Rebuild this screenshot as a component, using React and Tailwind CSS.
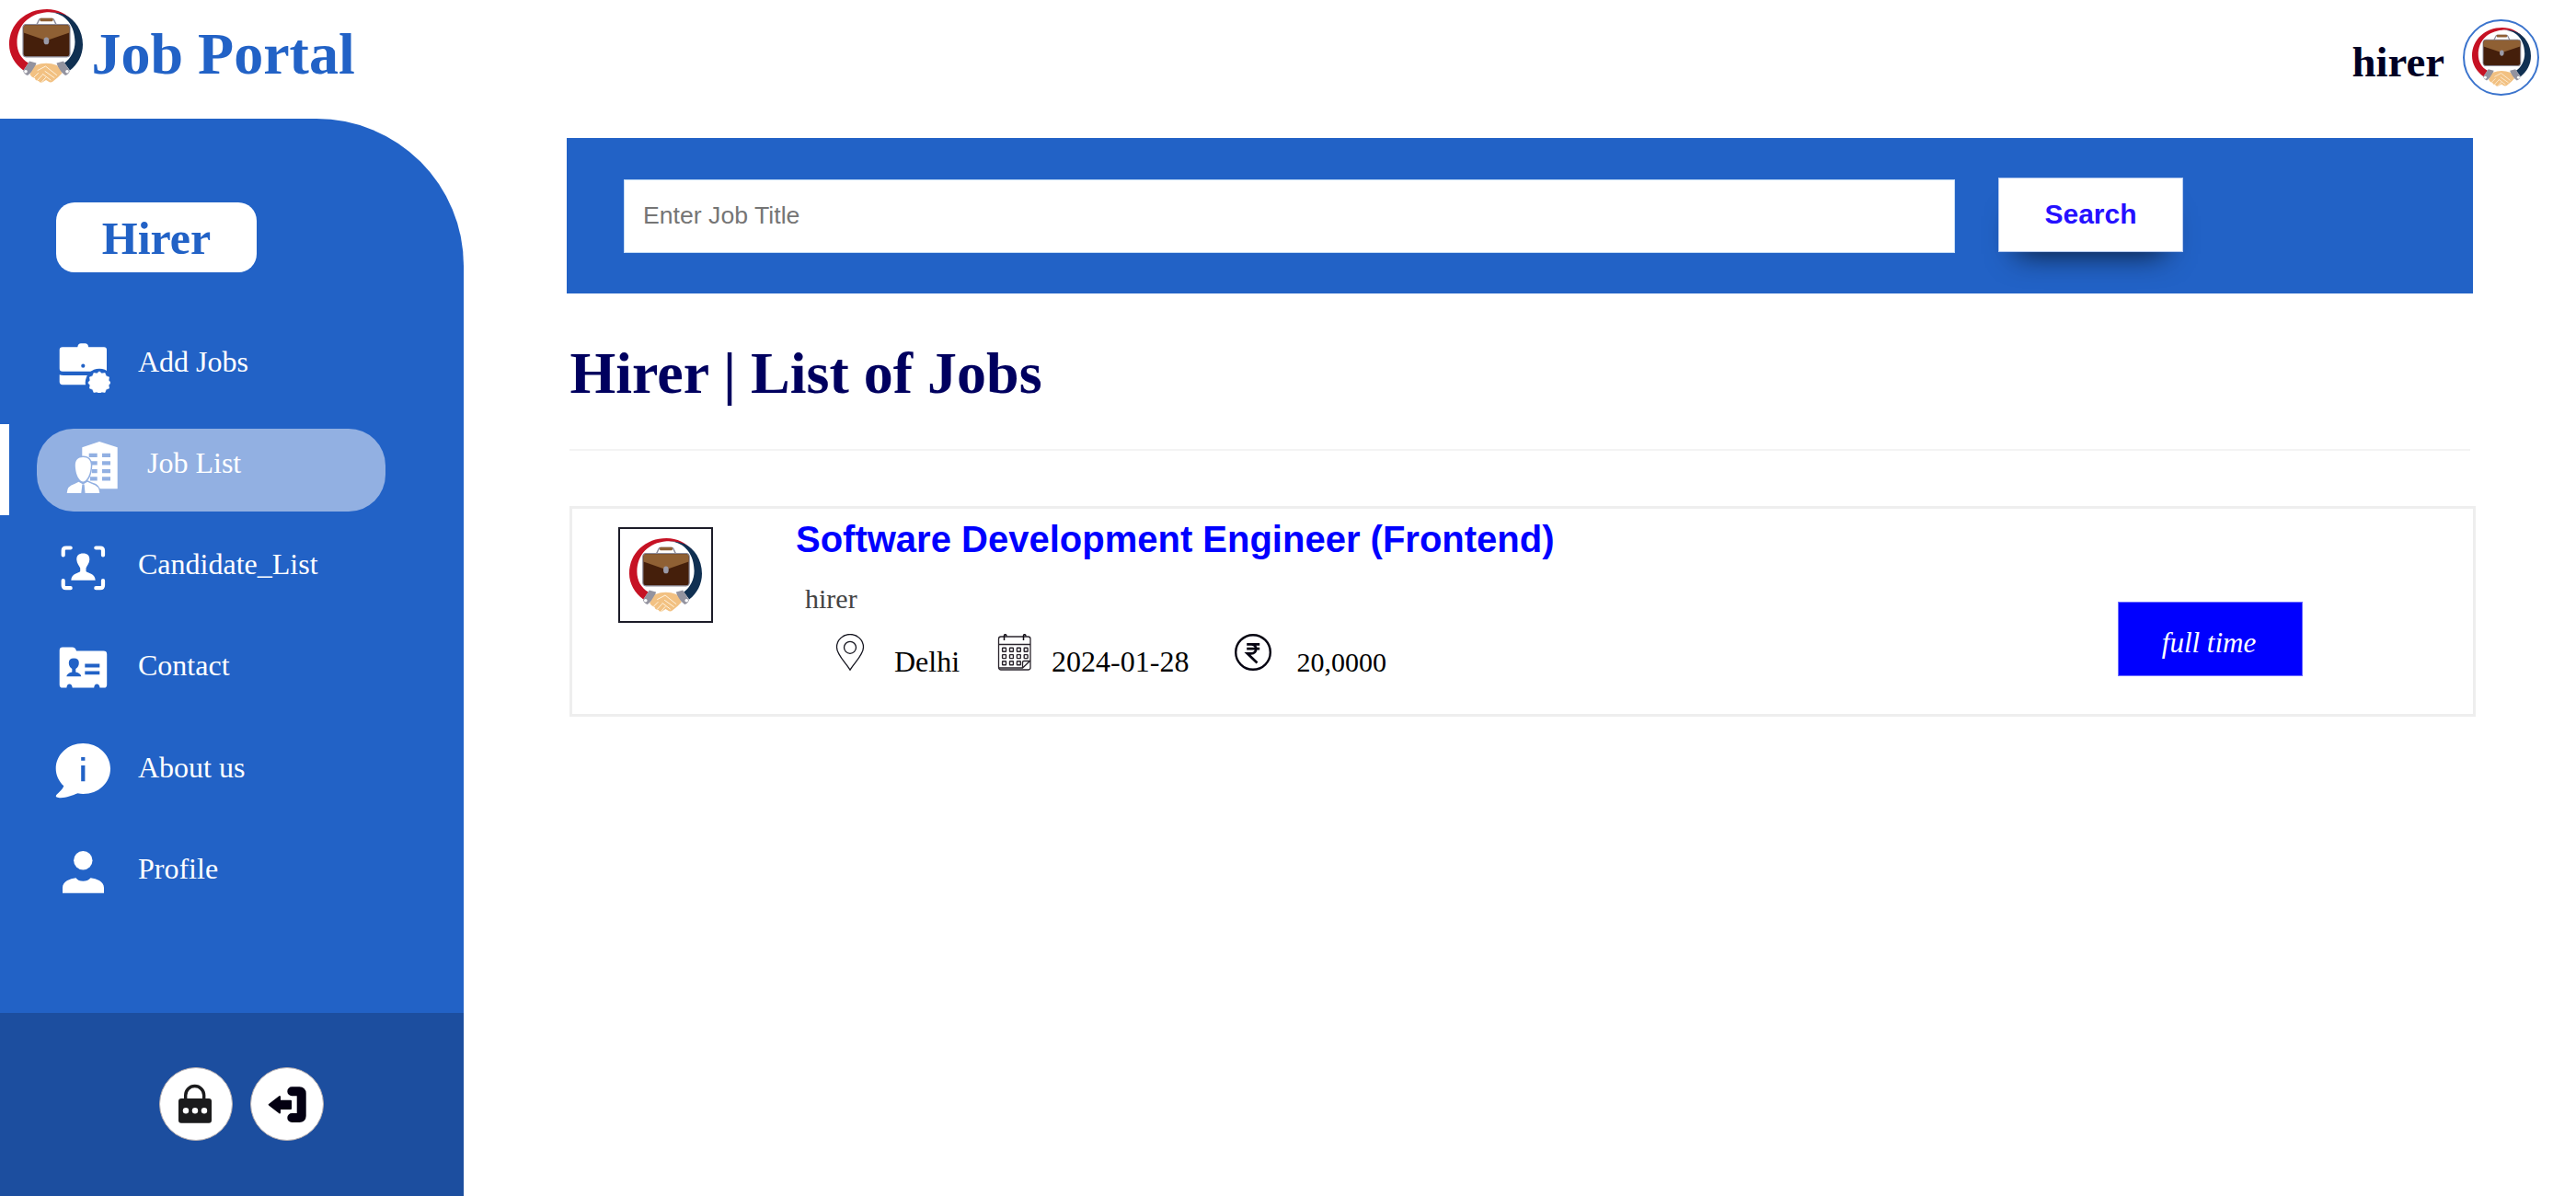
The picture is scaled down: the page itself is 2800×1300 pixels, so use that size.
import React from "react";

const SERIF = "font-['Liberation_Serif','Times_New_Roman',serif]";
const SANS = "font-['Liberation_Sans',Arial,sans-serif]";

function Logo({ className }) {
  return (
    <svg viewBox="0 0 80 80" preserveAspectRatio="none" className={className}>
      <path d="M15.5 66.5C6 59.5 0 49.500 0 38.500C0 16 18 0 41 0C53 0 62 5 69 12.500C60 5.500 51 2.800 41 3.300C21 5 8.500 18 8.500 36.500C8.500 46 13 54 21 58.500Z" fill="#c61224" />
      <path d="M44 3.500C62 4 71.500 19 71.500 35.500C71.500 45 67 53.500 60 58.500L66 66.500C74.500 60 80 50 80 38.500C80 23 71.500 11.500 61.500 6.500C56 4 50 3.200 44 3.500Z" fill="#103052" />
      <path d="M29.800 17L32.500 11.500Q33 10.500 34.500 10.500H46.500Q48 10.500 48.500 11.500L51.200 17" fill="none" stroke="#8d8d9c" strokeWidth="1.500" />
      <rect x="33.500" y="9.800" width="14" height="3.400" rx="1" fill="#8f6034" />
      <rect x="15" y="16.600" width="51" height="35.200" rx="3.500" fill="#451f0b" stroke="#8d8d9c" strokeWidth="1.200" />
      <path d="M15.600 25.500V20Q15.600 17.200 18.600 17.200H62.400Q65.400 17.200 65.400 20V25.500L43 33.200H38Z" fill="#8f6034" />
      <ellipse cx="40.400" cy="34.400" rx="2.900" ry="3.900" fill="#9a9aa8" />
      <path d="M22 56.500L29.500 58.500L27 66L20 72Q16 70.500 15.200 67Z" fill="#93939f" />
      <path d="M59 56.500L51.500 58.500L54 66L61 72Q65 70.500 65.800 67Z" fill="#93939f" />
      <circle cx="18" cy="67.800" r="1.800" fill="#fff" />
      <circle cx="63" cy="67.800" r="1.800" fill="#fff" />
      <path d="M28.500 61Q40 56.500 52 61L57.500 69.500Q53 74.500 47.500 78.500Q45 80.500 42.500 78.500L40 77L36 79.500Q33 80.500 32 78Q28 77.500 28 75Q24 74 22.500 70.500Z" fill="#f2c182" />
      <path d="M31 66.500L39.500 62L51.500 71.500M39 67.500L49 74.500M36.500 70.500L45 77M27 74L31.500 69.500M30.500 77.500L36 71.500M35 79.500L39.500 74.500" fill="none" stroke="#fff3df" strokeWidth="1" strokeLinecap="round" />
    </svg>
  );
}

const scallop = Array.from({ length: 24 }, (_, i) => {
  const a = (i * Math.PI) / 12 - Math.PI / 2;
  const r = i % 2 ? 10.4 : 12.2;
  return `${(48 + r * Math.cos(a)).toFixed(2)},${(49 + r * Math.sin(a)).toFixed(2)}`;
}).join(" ");

function AddJobsIcon() {
  return (
    <>
      <mask id="badge-gap">
        <rect width="60" height="60" fill="#fff" />
        <circle cx="48" cy="49" r="15.300" fill="#000" />
        <circle cx="30.300" cy="30.700" r="2.100" fill="#000" />
      </mask>
      <path mask="url(#badge-gap)" d="M8 10.300H24.300Q24.800 6.300 28 6.300H32.500Q35.700 6.300 36.200 10.300H53Q56 10.300 56 13.300V36.700H8Q4.700 36.700 4.700 33.500V13.300Q4.700 10.300 8 10.300ZM4.700 40.300Q6 41 9 41H38V51.300H8Q4.700 51 4.700 48Z" />
      <polygon points={scallop} stroke="#fff" strokeWidth=".6" strokeLinejoin="round" />
    </>
  );
}

function JobListIcon() {
  return (
    <>
      <path fillRule="evenodd" d="M19.300 9.300L38 3L57.700 9.300V54.300H38L19.300 46ZM26.700 15.700V20H35.700V15.700ZM41 15.700V20H50V15.700ZM28 24.300V28.500H35.700V24.300ZM41 24.300V28.500H50V24.300ZM30 33V37.200H35.700V33ZM41 33V37.200H50V33ZM28 41.300V45.600H35.700V41.300ZM41 41.300V45.600H50V41.300Z" />
      <g stroke="#92b0e2" strokeWidth="3" paintOrder="stroke">
        <path d="M2.700 59Q3 51 11 49L15.500 46.800L20.300 49.500L25 46.800L30 49Q38 51 38.300 59Z" />
        <path d="M20.300 20C26 20 29 23.500 28.800 29C28.600 36 26.500 42.500 22.500 45.800Q20.300 47.300 18 45.800C14 42.500 12 36 11.800 29C11.700 23.500 14.600 20 20.300 20Z" />
      </g>
      <path d="M19.400 49.500H21.600L22.600 59.500H18.200Z" fill="#92b0e2" />
    </>
  );
}

function CandidateIcon() {
  return (
    <>
      <path d="M8.700 16.500V11.500Q8.700 8.500 11.700 8.500H16.700M44.300 8.500H49Q52 8.500 52 11.500V16.500M52 44V49.200Q52 52.200 49 52.200H44.300M16.700 52.200H11.700Q8.700 52.200 8.700 49.200V44" fill="none" stroke="#fff" strokeWidth="4.200" strokeLinecap="round" />
      <path d="M30.300 14.500C35 14.500 37.600 17 37.300 21.500C37 25.500 34.500 28 33.500 30.500V34C35 36 43.500 36 43.700 43.800H17.300C17.500 36 26 36 27.200 34V30.500C26 28 23.600 25.500 23.300 21.500C23 17 25.700 14.500 30.300 14.500Z" />
    </>
  );
}

function ContactIcon() {
  return (
    <path fillRule="evenodd" d="M8 6.600H18.500Q22 6.600 23 10.600H52.500Q56.200 10.600 56.200 14V47.200Q56.200 50.600 53 50.600H48.500Q48 46.500 45.300 46.500Q42.600 46.500 42.200 50.600H18.700Q18.200 46.500 15.500 46.500Q12.800 46.500 12.400 50.600H8Q4.700 50.600 4.700 47.200V10Q4.700 6.600 8 6.600ZM20.300 18.600Q14.800 18.600 14.800 23.500Q14.800 27.500 18.300 30V33.500Q12.600 35 12.300 38.300H28.300Q28 35 22.300 33.500V30Q25.800 27.500 25.800 23.500Q25.800 18.600 20.300 18.600ZM32.300 24.600V28.500H48.300V24.600ZM32.300 32.400V36.300H48.300V32.400Z" />
  );
}

function AboutIcon() {
  return (
    <path fillRule="evenodd" d="M30.300 0C14 0 .7 12 .7 27.500C.7 34.500 4 41.500 9.300 46.300C8 50.500 3.500 53.500 1 56.500C0 58.500 2.500 59.200 6 59.200C12 59.200 19 56.500 24.500 54.300Q27.500 55 30.300 55C47 55 60 43 60 27.500C60 12 46.500 0 30.300 0ZM28.200 15H32.400V18.800H28.200ZM28.200 24H32.400V41.300H28.200Z" />
  );
}

function ProfileIcon() {
  return (
    <>
      <circle cx="30.300" cy="17.200" r="10.200" />
      <path d="M8 52.800V47C8 40 16 37 22.500 36.200Q25 39.800 30.300 39.800Q35.500 39.800 38.500 36.200C45 37 53 40 53 47V52.800Z" />
    </>
  );
}

const NAV = [
  { label: "Add Jobs", Icon: AddJobsIcon },
  { label: "Job List", Icon: JobListIcon, active: true },
  { label: "Candidate_List", Icon: CandidateIcon },
  { label: "Contact", Icon: ContactIcon },
  { label: "About us", Icon: AboutIcon },
  { label: "Profile", Icon: ProfileIcon },
];

function NavItem({ label, Icon, active }) {
  return (
    <li
      className={
        "relative ml-[40px] flex h-[90px] w-[379px] items-start gap-[30px] rounded-[40px] pt-[11px] " +
        (active ? "bg-[#92b0e2] pl-[30px]" : "pl-[20px]")
      }
    >
      {active && <span className="absolute -left-[40px] -top-[5px] h-[99px] w-[10px] bg-white" />}
      <svg viewBox="0 0 60 60" fill="#fff" className="h-[60px] w-[60px] shrink-0">
        <Icon />
      </svg>
      <span className="pt-[8px] text-[32px] leading-[36px] text-white">{label}</span>
    </li>
  );
}

function Sidebar() {
  return (
    <aside className="flex h-[1171px] w-[504px] shrink-0 flex-col overflow-hidden rounded-tr-[160px] bg-[#2262c6]">
      <div className="ml-[61px] mt-[91px] flex h-[76px] w-[218px] items-center justify-center rounded-[20px] bg-white text-[50px] font-bold leading-[56px] text-[#2262c6]">
        <span className="mt-[1px]">Hirer</span>
      </div>
      <ul className="mt-[59.500px] flex flex-1 flex-col gap-[20.25px]">
        {NAV.map((n) => (
          <NavItem key={n.label} {...n} />
        ))}
      </ul>
      <div className="flex h-[199px] gap-[19px] bg-[#1c4e9f] pl-[173px] pt-[59px]">
        <button className="h-[80px] w-[80px] overflow-hidden rounded-full border border-[#b5aeb0] bg-white">
          <svg viewBox="1 1 78 78" className="h-full w-full">
            <path d="M28.700 36V30.500A10 10 0 0 1 48.700 30.500V36" fill="none" stroke="#1b1b1c" strokeWidth="3.400" />
            <rect x="21" y="34" width="36" height="26.700" rx="3" fill="#1b1b1c" />
            <g fill="#fff">
              <circle cx="29" cy="47.300" r="3.200" />
              <circle cx="39" cy="47.300" r="3.200" />
              <circle cx="49" cy="47.300" r="3.200" />
            </g>
          </svg>
        </button>
        <button className="h-[80px] w-[80px] overflow-hidden rounded-full border border-[#b5aeb0] bg-white">
          <svg viewBox="1 1 78 78" className="h-full w-full">
            <path d="M45.300 26.300H53.500Q55.700 26.300 55.700 28.500V53Q55.700 55 53.500 55H45.300" fill="none" stroke="#040012" strokeWidth="10" strokeLinecap="round" strokeLinejoin="round" />
            <path d="M20.700 40.700L32 32V36.700H44V45H32V49.500Z" fill="#040012" stroke="#040012" strokeWidth="2" strokeLinejoin="round" />
          </svg>
        </button>
      </div>
    </aside>
  );
}

function PinIcon() {
  return (
    <svg viewBox="0 0 40 40" className="h-[40px] w-[40px]" fill="none" stroke="#15151f" strokeWidth="1.300">
      <path d="M20 39.300C16 32 5.500 23 5.500 14.500A14.500 14 0 0 1 34.500 14.500C34.500 23 24 32 20 39.300Z" />
      <circle cx="20" cy="14.800" r="6.500" />
    </svg>
  );
}

function CalendarIcon() {
  return (
    <svg viewBox="0 0 40 40" className="h-[40px] w-[40px]" fill="none" stroke="#2a242c" strokeWidth="1.300">
      <rect x="2.500" y="3" width="34.500" height="36" rx="2.500" />
      <path d="M2.500 11.500H37M3 37H28.500L36.500 29.500M28.500 37V31Q28.500 29.500 30 29.500H37" />
      <path d="M8.500 7V2Q8.500 .7 9.500 .7Q11 .7 11 2.500M29.500 7V2Q29.500 .7 30.500 .7Q32 .7 32 2.500" stroke="#100c14" strokeWidth="1.500" />
      {[15.3, 22.6, 29.8].map((y, r) =>
        [6.6, 14.5, 22.4, 30.2].map((x, c) =>
          r === 2 && c === 3 ? null : <rect key={`${r}-${c}`} x={x} y={y} width="3.900" height="4" rx=".5" strokeWidth="1.400" />
        )
      )}
    </svg>
  );
}

function RupeeIcon() {
  return (
    <svg viewBox="0 0 40 40" className="h-[40px] w-[40px]" fill="none" stroke="#060412" strokeWidth="2.400">
      <circle cx="20" cy="20" r="18.800" />
      <path d="M13.200 11.400H27.200M13.200 16.200H27.200M13.200 11.400H18C25 11.400 25 21.300 18 21.300H13.800L24.500 31.500" strokeWidth="2.700" />
    </svg>
  );
}

function JobCard() {
  return (
    <article className="ml-[3px] mt-[60px] flex h-[229px] w-[2072px] border-[3px] border-[#eeeeee]">
      <div className="ml-[50px] mt-[20px] flex h-[104px] w-[103px] items-center justify-center border-2 border-[#1c1c28]">
        <Logo className="h-[80px] w-[79px]" />
      </div>
      <div className="ml-[90px] w-[1437px] shrink-0">
        <h2 className={`${SANS} mt-[10px] text-[40px] font-bold leading-[46px] text-[#0000ff]`}>
          Software Development Engineer (Frontend)
        </h2>
        <p className="ml-[10px] mt-[25px] text-[30px] leading-[34px] text-[#444444]">hirer</p>
        <div className="mt-[21px] flex items-start text-[32px] leading-[36px] text-black">
          <div className="ml-[39px]"><PinIcon /></div>
          <span className="ml-[28px] mt-[12px]">Delhi</span>
          <div className="ml-[40px]"><CalendarIcon /></div>
          <span className="ml-[20px] mt-[12px]">2024-01-28</span>
          <div className="ml-[50px]"><RupeeIcon /></div>
          <span className="ml-[27px] mt-[14px] text-[30px] leading-[34px]">20,0000</span>
        </div>
      </div>
      <div className="mt-[101px] flex h-[81px] w-[201px] items-center justify-center border border-[#6f6fff] bg-[#0000ff]">
        <span className="mr-[3px] mt-[9px] text-[31px] italic leading-[36px] text-white">full time</span>
      </div>
    </article>
  );
}

export default function App() {
  return (
    <div className={`${SERIF} h-[1300px] w-[2800px] overflow-hidden bg-white`}>
      <header className="flex h-[129px] items-start justify-between pl-[10px] pr-[40px]">
        <div className="flex items-start">
          <Logo className="mt-[10px] h-[80px] w-[80px]" />
          <h1 className="ml-[9.500px] mt-[23px] text-[64px] font-bold leading-[72px] text-[#2262c6]">Job Portal</h1>
        </div>
        <div className="flex items-start">
          <span className="mt-[40px] text-[46.800px] font-bold leading-[54px] text-[#000024]">hirer</span>
          <div className="ml-[20px] mt-[20.500px] flex h-[83px] w-[83px] items-center justify-center rounded-full border-2 border-[#3b74cd]">
            <Logo className="h-[64px] w-[64px]" />
          </div>
        </div>
      </header>
      <div className="flex">
        <Sidebar />
        <main className="ml-[112px] pt-[21px]">
          <div className="flex h-[169px] w-[2072px] items-start bg-[#2262c6] pl-[62px]">
            <input
              type="text"
              placeholder="Enter Job Title"
              className={`${SANS} mt-[45px] h-[80px] w-[1447px] border border-[#c3dcf5] bg-white pb-[2px] pl-[20px] text-[26.670px] text-black placeholder:text-[#757575]`}
            />
            <button className={`${SANS} ml-[47px] mt-[43px] h-[81px] w-[201px] border border-[#b5c9ee] bg-white pb-[2px] text-[30px] font-bold text-[#2510ff] shadow-[0_22px_32px_-20px_rgba(0,0,0,0.75)]`}>
              Search
            </button>
          </div>
          <h1 className="ml-[3.500px] mt-[51px] text-[64px] font-bold leading-[72px] text-[#00005f]">Hirer | List of Jobs</h1>
          <hr className="ml-[3px] mt-[46px] h-[2px] w-[2066px] border-0 bg-[#f3f3f3]" />
          <JobCard />
        </main>
      </div>
    </div>
  );
}
